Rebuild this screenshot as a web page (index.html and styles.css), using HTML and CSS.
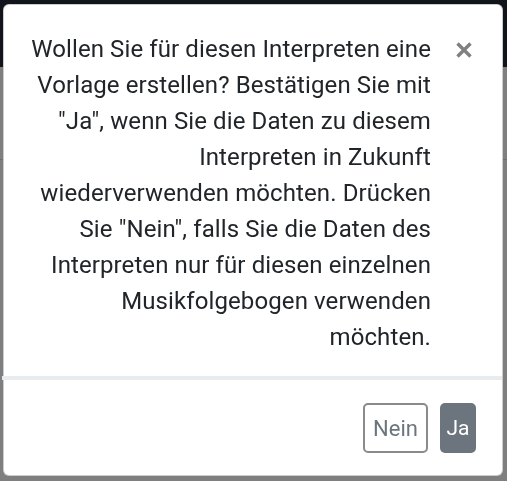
FILE: index.html
```html
<!DOCTYPE html>
<html lang="de">
<head>
<meta charset="utf-8">
<link rel="stylesheet" href="styles.css">
</head>
<body>
<div class="page">
  <div class="navbar"></div>
  <div class="content">
    <div class="rule"></div>
    <div class="peek">g</div>
  </div>
</div>
<div class="backdrop"></div>
<div class="modal">
  <div class="modal-header">
    <h5 class="modal-title">Wollen Sie für diesen Interpreten eine<br>Vorlage erstellen? Bestätigen Sie mit<br>"Ja", wenn Sie die Daten zu diesem<br>Interpreten in Zukunft<br>wiederverwenden möchten. Drücken<br>Sie "Nein", falls Sie die Daten des<br>Interpreten nur für diesen einzelnen<br>Musikfolgebogen verwenden<br>möchten.</h5>
    <button class="close" type="button" aria-label="Close">
      <svg width="18" height="16" viewBox="0 0 18 16"><path d="M2.5 1.5 L15.5 14.5 M15.5 1.5 L2.5 14.5" stroke="#808080" stroke-width="3.4" stroke-linecap="butt"/></svg>
    </button>
  </div>
  <div class="modal-footer">
    <button class="btn btn-outline" type="button">Nein</button>
    <button class="btn btn-solid" type="button">Ja</button>
  </div>
</div>
</body>
</html>
```
FILE: styles.css
```css
html, body {
  margin: 0;
  padding: 0;
  height: 100%;
  overflow: hidden;
}
body {
  font-family: Roboto, "Open Sans", "Liberation Sans", sans-serif;
  background: #ffffff;
}
.page {
  display: flex;
  flex-direction: column;
  height: 100%;
}
.navbar {
  height: 67px;
  background: #222b36;
  flex: none;
}
.content {
  flex: 1;
  position: relative;
}
.rule {
  margin-top: 92px;
  height: 1px;
  background: #dcdcdc;
}
.peek {
  position: absolute;
  left: 149px;
  top: 452px;
  font-size: 20px;
  color: #212529;
}
.backdrop {
  position: fixed;
  inset: 0;
  background: rgba(0, 0, 0, 0.5);
}
.modal {
  position: absolute;
  left: 3px;
  top: 4px;
  width: 500px;
  height: 472px;
  box-sizing: border-box;
  background: #fff;
  border: 1px solid rgba(0, 0, 0, 0.2);
  border-radius: 6px;
  display: flex;
  flex-direction: column;
}
.modal-header {
  display: flex;
  align-items: flex-start;
  padding: 26px 29px 21px 18px;
  border-bottom: 4px solid #e9ecef;
  margin-left: -2px;
}
.modal-title {
  flex: 1;
  margin: 0;
  text-align: right;
  font-size: 24px;
  font-weight: 400;
  line-height: 36px;
  letter-spacing: 0.1px;
  color: #212529;
}
.close {
  flex: none;
  background: none;
  border: 0;
  padding: 0;
  margin: 11px 0 0 24px;
  width: 18px;
  height: 16px;
  display: flex;
}
.modal-footer {
  display: flex;
  justify-content: flex-end;
  gap: 12px;
  padding: 23px 26px 22px;
}
.btn {
  font-family: inherit;
  font-size: 22px;
  height: 50px;
  border-radius: 5px;
  box-sizing: border-box;
  cursor: pointer;
  text-align: center;
}
.btn-outline {
  background: #fff;
  color: #6c757d;
  border: 2px solid #8a8a8a;
  padding: 0;
  width: 65px;
}
.btn-solid {
  background: #6c757d;
  color: #fff;
  border: 0;
  padding: 0;
  width: 36px;
  font-size: 21px;
}
```
